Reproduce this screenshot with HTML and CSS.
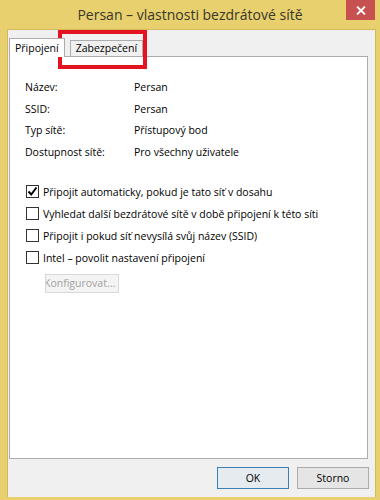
FILE: index.html
```html
<!DOCTYPE html>
<html lang="cs">
<head>
    <meta charset="UTF-8">
    <title>Persan – vlastnosti bezdrátové sítě</title>
    <link rel="stylesheet" href="styles.css">
</head>
<body>
    <div class="titlebar">
        <span></span>
        <div class="title">Persan – vlastnosti bezdrátové sítě</div>
        <div class="close">
            <svg width="10" height="9" viewBox="0 0 10 9"><path d="M1 0.5 L9 8.5 M9 0.5 L1 8.5" stroke="#fff" stroke-width="1.8"/></svg>
        </div>
    </div>

    <div class="client">
        <div class="tabs">
            <div class="tab active">Připojení</div>
            <div class="tab">Zabezpečení</div>
        </div>

        <div class="panel">
            <div class="info">
                <span>Název:</span><span>Persan</span>
                <span>SSID:</span><span>Persan</span>
                <span>Typ sítě:</span><span>Přístupový bod</span>
                <span>Dostupnost sítě:</span><span>Pro všechny uživatele</span>
            </div>

            <div class="checks">
                <label class="check"><span class="box checked"><svg width="11" height="11" viewBox="0 0 11 11"><path d="M1.5 5.5 L4.2 8.5 L9.5 1.5" fill="none" stroke="#000" stroke-width="2"/></svg></span>Připojit automaticky, pokud je tato síť v dosahu</label>
                <label class="check"><span class="box"></span>Vyhledat další bezdrátové sítě v době připojení k této síti</label>
                <label class="check"><span class="box"></span>Připojit i pokud síť nevysílá svůj název (SSID)</label>
                <label class="check"><span class="box"></span>Intel – povolit nastavení připojení</label>
            </div>

            <button class="config" disabled><span>Konfigurovat...</span></button>
        </div>

        <div class="footer">
            <button class="btn default">OK</button>
            <button class="btn">Storno</button>
        </div>
    </div>

    <div class="highlight"></div>
</body>
</html>
```

FILE: styles.css
```css
body {
    margin: 0;
    width: 380px;
    height: 500px;
    overflow: hidden;
    background: #e8d06e;
    font-family: "Open Sans", "Noto Sans", sans-serif;
    font-size: 10.5px;
    color: #000;
    position: relative;
}
.titlebar {
    height: 29px;
    display: grid;
    grid-template-columns: 1fr auto 1fr;
}
.title {
    font-size: 14px;
    color: #38372a;
    line-height: 29px;
}
.close {
    justify-self: end;
    margin-right: 5px;
    width: 29px;
    height: 20px;
    background: #c75050;
    display: flex;
    align-items: center;
    justify-content: center;
}
.client {
    margin: 0 4px 0 7px;
    height: 468px;
    box-sizing: border-box;
    background: #f0f0f0;
    border: 1px solid #d1b95c;
    border-bottom: none;
    display: flex;
    flex-direction: column;
}
.tabs {
    display: flex;
    align-items: flex-end;
    padding: 8px 0 0 1px;
}
.tab {
    height: 15px;
    line-height: 15px;
    padding: 0 5px;
    border: 1px solid #acacac;
    border-bottom: none;
    background: #f0f0f0;
    margin-left: 5px;
}
.tab.active {
    height: 18px;
    line-height: 18px;
    background: #fff;
    margin-left: 0;
    margin-bottom: -1px;
    position: relative;
    z-index: 1;
}
.panel {
    margin: 0 7px 0 1px;
    height: 403px;
    box-sizing: border-box;
    background: #fff;
    border: 1px solid #acacac;
    padding: 20px 0 0 15px;
}
.info {
    display: grid;
    grid-template-columns: 109px auto;
    line-height: 21.7px;
}
.checks {
    margin-top: 17px;
    display: flex;
    flex-direction: column;
}
.check {
    display: flex;
    align-items: center;
    height: 22px;
    margin-left: 1px;
}
.box {
    width: 11px;
    height: 11px;
    border: 1px solid #333;
    background: #fff;
    margin-right: 4px;
    display: flex;
    align-items: center;
    justify-content: center;
}
.config {
    margin: 5px 0 0 20px;
    width: 74px;
    height: 19px;
    padding: 0;
    overflow: hidden;
    text-align: left;
    font: inherit;
    color: #a0a0a0;
    background: #f4f4f4;
    border: 1px solid #d9d9d9;
}
.config span {
    margin-left: -2px;
}
.footer {
    display: flex;
    justify-content: flex-end;
    gap: 8px;
    padding: 8px 6px 0 0;
}
.btn {
    width: 72px;
    height: 22px;
    font: inherit;
    color: #000;
    background: #e5e5e5;
    border: 1px solid #acacac;
    padding: 0;
}
.btn.default {
    border-color: #3c7fb1;
    background: #e6ebf0;
}
.highlight {
    position: absolute;
    left: 58px;
    top: 30px;
    width: 81px;
    height: 31px;
    border: 4px solid #e3141f;
}
```
